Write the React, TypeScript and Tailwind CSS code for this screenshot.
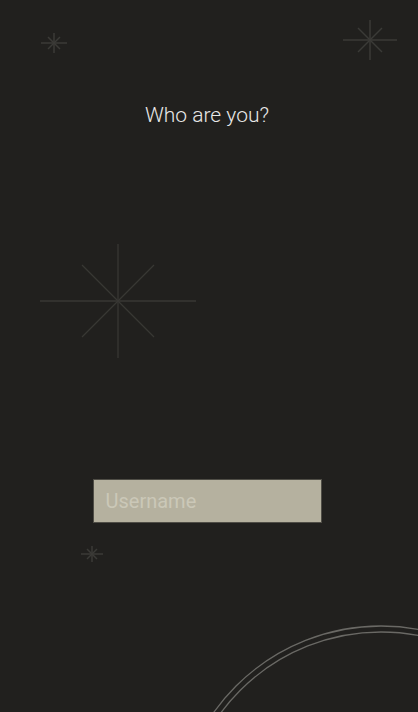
import React from "react";

type StarProps = { cx: number; cy: number; h: number; v: number; d: number };

const Star = ({ cx, cy, h, v, d }: StarProps) => (
  <g>
    <line x1={cx - h} y1={cy} x2={cx + h} y2={cy} />
    <line x1={cx} y1={cy - v} x2={cx} y2={cy + v} />
    <line x1={cx - d} y1={cy - d} x2={cx + d} y2={cy + d} />
    <line x1={cx - d} y1={cy + d} x2={cx + d} y2={cy - d} />
  </g>
);

export default function App() {
  return (
    <div className="relative w-full h-[712px] overflow-hidden bg-[#21201e] font-['Roboto',sans-serif]">
      {/* background sparkles and arcs */}
      <svg
        className="absolute inset-0 pointer-events-none"
        width="418"
        height="712"
        viewBox="0 0 418 712"
        fill="none"
      >
        <g stroke="#3b3a37" strokeWidth="1.5">
          <Star cx={54} cy={43} h={13} v={10} d={6} />
          <Star cx={370} cy={40} h={27} v={20} d={12} />
          <Star cx={92} cy={554} h={11} v={8} d={5} />
        </g>
        <g stroke="#383734" strokeWidth="1.3">
          <Star cx={118} cy={301} h={78} v={57} d={36} />
        </g>
        <g stroke="#6a6965" strokeWidth="1.3">
          <circle cx={381} cy={831} r={205} />
          <circle cx={381} cy={831} r={199} />
        </g>
      </svg>

      <div className="relative flex flex-col items-center pt-[101px] pr-[4px]">
        <h1 className="text-[21px] leading-[28px] font-light text-[#e8e8e8]">
          Who are you?
        </h1>
        <input
          type="text"
          placeholder="Username"
          className="mt-[350px] w-[229px] h-[44px] px-[12px] bg-[#b5b19f] border border-[#4f4d46] text-[20px] text-[#3a3934] placeholder:text-[#cbc8b8] outline-none"
        />
      </div>
    </div>
  );
}
